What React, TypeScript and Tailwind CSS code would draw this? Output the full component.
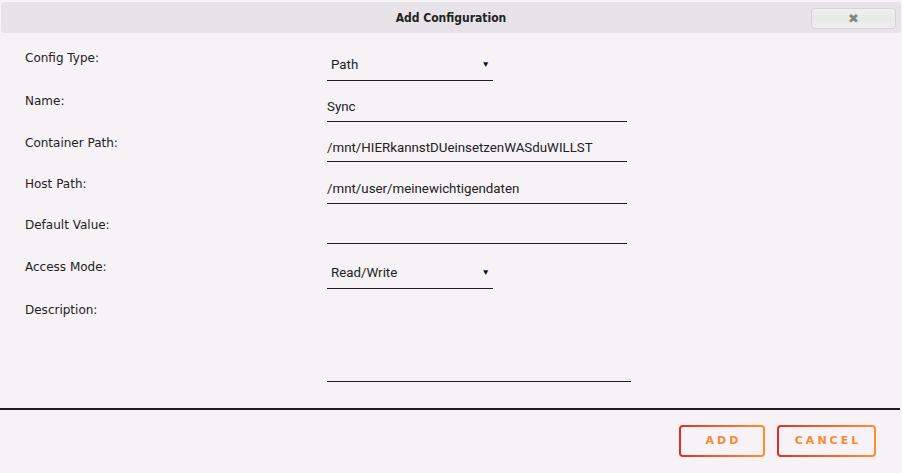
import React from "react";

// h = row height, line = distance from row top to underline, pt = text offset
const rows = [
	{ label: "Config Type:", kind: "select", value: "Path", h: 43, line: 30, pt: 7 },
	{ label: "Name:", kind: "input", value: "Sync", h: 42, line: 28, pt: 6 },
	{ label: "Container Path:", kind: "input", value: "/mnt/HIERkannstDUeinsetzenWASduWILLST", h: 41, line: 26, pt: 5 },
	{ label: "Host Path:", kind: "input", value: "/mnt/user/meinewichtigendaten", h: 41, line: 27, pt: 5 },
	{ label: "Default Value:", kind: "input", value: "", h: 42, line: 26, pt: 5 },
	{ label: "Access Mode:", kind: "select", value: "Read/Write", h: 43, line: 29, pt: 6 },
];

const labelFont = { fontFamily: '"DejaVu Sans", sans-serif' };
const valueFont = { fontFamily: 'Roboto, "Open Sans", sans-serif' };

const GradientButton: React.FC<{ text: string; width: string }> = ({ text, width }) => (
	<div className={`p-[2px] rounded-[4px] bg-gradient-to-r from-[#e22a2a] to-[#ff8f2e] ${width}`}>
		<div className="h-[28px] rounded-[2px] bg-[#f6f2f6] flex items-center justify-center pt-[1px]">
			<span
				className="text-[11px] font-bold tracking-[3px] text-[#f78a33] pl-[3px]"
				style={labelFont}
			>
				{text}
			</span>
		</div>
	</div>
);

const App: React.FC = () => {
	return (
		<div className="w-[902px] h-[473px] bg-[#f6f2f6] flex flex-col overflow-hidden">
			{/* title bar */}
			<div className="mx-[1px] mt-[2px] h-[31px] rounded-[4px] bg-[#e8e3e8] relative flex items-center justify-center">
				<span
					className="text-[12px] font-bold text-[#222]"
					style={{ fontFamily: '"DejaVu Sans Condensed", "DejaVu Sans", sans-serif', fontStretch: "condensed" }}
				>
					Add Configuration
				</span>
				<div className="absolute right-[5px] top-[6px] w-[85px] h-[21px] rounded-[4px] border border-[#d6d3d6] bg-gradient-to-b from-[#f1f0f1] via-[#e9e8e9] to-[#f0eff0] flex items-center justify-center">
					<span className="text-[13px] font-bold text-[#858585] leading-none" style={labelFont}>
						✖
					</span>
				</div>
			</div>

			{/* form */}
			<div className="flex flex-col mt-[17px]">
				{rows.map((row, i) => (
					<div key={i} className="flex" style={{ height: row.h }}>
						<div className="w-[327px] pl-[25px] text-[12px] leading-[16px] text-[#222]" style={labelFont}>
							{row.label}
						</div>
						{row.kind === "select" ? (
							<div
								className="w-[166px] border-b-[1.5px] border-[#1e1e1e] pl-[4px] pr-[3px] flex justify-between items-start"
								style={{ height: row.line + 1, paddingTop: row.pt }}
							>
								<span className="block text-[13.3px] leading-[16px] text-[#222]" style={valueFont}>
									{row.value}
								</span>
								<span className="block text-[8.5px] leading-[14px] text-[#111]">▼</span>
							</div>
						) : (
							<div
								className="w-[300px] border-b-[1.5px] border-[#1e1e1e]"
								style={{ height: row.line + 1, paddingTop: row.pt }}
							>
								<span className="block text-[13.3px] leading-[16px] text-[#222]" style={valueFont}>
									{row.value}
								</span>
							</div>
						)}
					</div>
				))}
				<div className="flex">
					<div className="w-[327px] pl-[25px] text-[12px] leading-[16px] text-[#222]" style={labelFont}>
						Description:
					</div>
					<div className="w-[304px] h-[80px] border-b-[1.5px] border-[#1e1e1e]" />
				</div>
			</div>

			<div className="mt-[26px] h-[1.5px] bg-[#1e1e1e] mr-[2px]" />

			<div className="flex justify-end gap-[12px] mt-[15px] pr-[26px]">
				<GradientButton text="ADD" width="w-[86px]" />
				<GradientButton text="CANCEL" width="w-[99px]" />
			</div>
		</div>
	);
};

export default App;
